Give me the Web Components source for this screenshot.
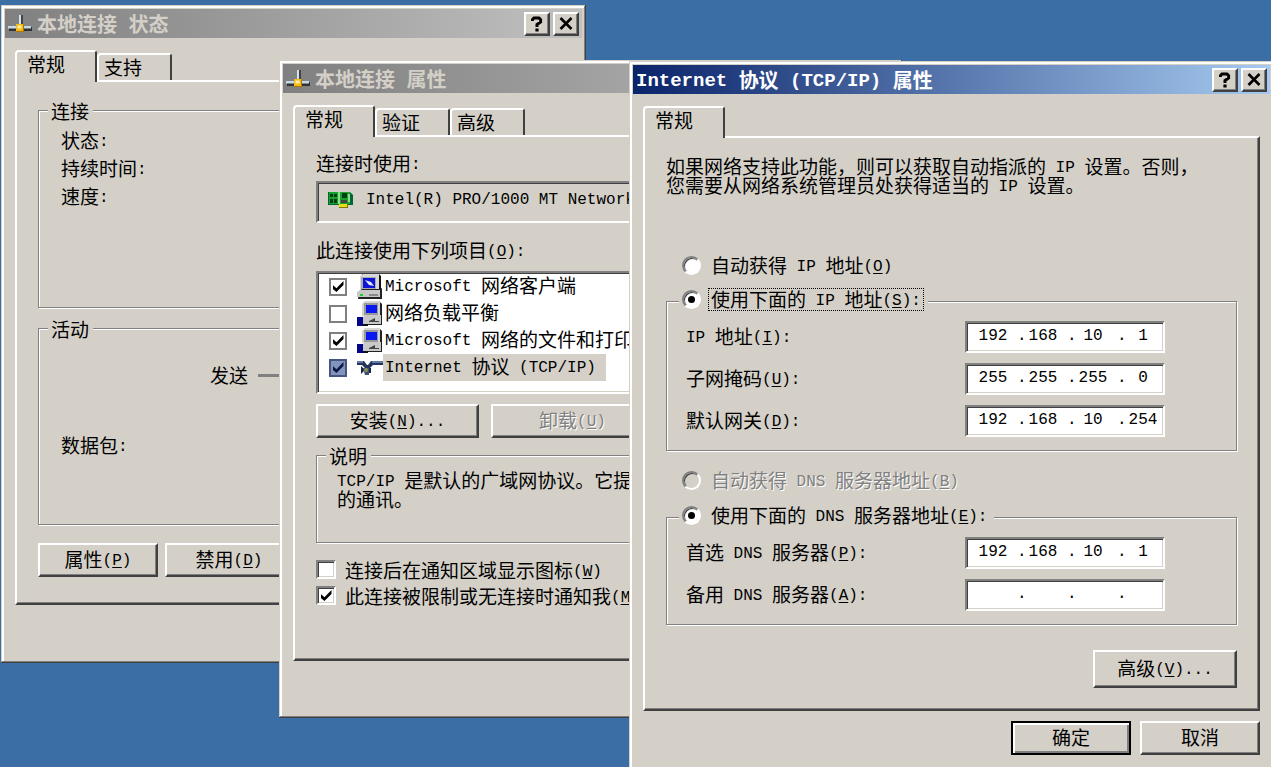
<!DOCTYPE html>
<html lang="zh-CN">
<head>
<meta charset="utf-8">
<title>Internet 协议 (TCP/IP) 属性</title>
<style>
  html, body {
    height: 100%;
  }
  body {
    margin: 0;
    position: relative;
    overflow: hidden;
    background: #3a6ea5;
    color: #000;
    font: 19px/19px "Noto Sans CJK SC", sans-serif;
    --face: #d4d0c8;
    --shadow: #808080;
    --dark: #404040;
  }

  /* the three windows on the desktop */
  #status { left: 1px; top: 5px; width: 46vw; }
  #connection { left: 279px; top: 60px; width: 49vw; }
  #tcpip { left: 629px; top: 61px; right: -3px; }

  p { margin: 0; }
  u { text-underline-offset: 2px; }
  .row { display: flex; align-items: center; }
  .stats p { line-height: 28px; padding-left: 22px; white-space: nowrap; }
  .stats .send { display: flex; align-items: center; gap: 10px; padding-left: 171px; margin-top: 17px; }
  .send::after { content: ""; flex: 1; height: 3px; margin-right: 40px; background: var(--shadow); }
  .stats .packets { margin-top: 42px; }
  .nowrap { white-space: nowrap; }
</style>
</head>
<body>

<desktop-window id="status">
  <net-icon slot="icon" kind="link"></net-icon>
  <span slot="title">本地连接<en-text> </en-text>状态</span>
  <tab-view style="--top: 19px; --bottom: 26px">
    <span slot="active">常规</span>
    <span slot="tabs">支持</span>
    <group-box class="stats" style="--height: 207px; --inset: 6px">
      <span slot="legend">连接</span>
      <p>状态<en-text>:</en-text></p>
      <p>持续时间<en-text>:</en-text></p>
      <p>速度<en-text>:</en-text></p>
    </group-box>
    <group-box class="stats" style="--height: 206px; --inset: 6px; margin-top: 11px">
      <span slot="legend">活动</span>
      <p class="send">发送</p>
      <p class="packets">数据包<en-text>:</en-text></p>
    </group-box>
    <div class="row" style="gap: 7px; margin-top: 18px">
      <push-button style="width: 120px">属性<en-text>(<u>P</u>)</en-text></push-button>
      <push-button style="width: 128px">禁用<en-text>(<u>D</u>)</en-text></push-button>
    </div>
  </tab-view>
  <div style="height: 54px"></div>
</desktop-window>

<desktop-window id="connection">
  <net-icon slot="icon" kind="link"></net-icon>
  <span slot="title">本地连接<en-text> </en-text>属性</span>
  <tab-view style="--top: 16px; --bottom: 54px">
    <span slot="active">常规</span>
    <span slot="tabs">验证</span>
    <span slot="tabs">高级</span>
    <p>连接时使用<en-text>:</en-text></p>
    <adapter-box style="margin-top: 9px">
      <net-icon kind="card"></net-icon>
      <en-text>Intel(R) PRO/1000 MT Network</en-text>
    </adapter-box>
    <p style="margin-top: 17px">此连接使用下列项目<en-text>(<u>O</u>):</en-text></p>
    <component-list style="margin-top: 12px">
      <component-item checked kind="client"><en-text>Microsoft </en-text>网络客户端</component-item>
      <component-item kind="service">网络负载平衡</component-item>
      <component-item checked kind="service"><en-text>Microsoft </en-text>网络的文件和打印</component-item>
      <component-item checked selected kind="protocol"><en-text>Internet </en-text>协议<en-text> (TCP/IP)</en-text></component-item>
    </component-list>
    <div class="row" style="gap: 12px; margin-top: 10px">
      <push-button style="width: 163px">安装<en-text>(<u>N</u>)...</en-text></push-button>
      <push-button disabled style="width: 163px">卸载<en-text>(<u>U</u>)</en-text></push-button>
    </div>
    <group-box style="--height: 97px; --inset: 5px; margin-top: 8px">
      <span slot="legend">说明</span>
      <p class="nowrap" style="padding-left: 20px"><en-text>TCP/IP </en-text>是默认的广域网协议。它提<br>的通讯。</p>
    </group-box>
    <check-option style="margin-top: 17px">连接后在通知区域显示图标<en-text>(<u>W</u>)</en-text></check-option>
    <check-option checked style="margin-top: 7px">此连接被限制或无连接时通知我<en-text>(<u>M</u>)</en-text></check-option>
  </tab-view>
  <div style="height: 53px"></div>
</desktop-window>

<desktop-window id="tcpip" active>
  <span slot="title"><en-text>Internet </en-text>协议<en-text> (TCP/IP) </en-text>属性</span>
  <tab-view style="--top: 18px; --bottom: 21px">
    <span slot="active">常规</span>
    <p class="nowrap">如果网络支持此功能，则可以获取自动指派的<en-text> IP </en-text>设置。否则，<br>您需要从网络系统管理员处获得适当的<en-text> IP </en-text>设置。</p>
    <radio-option group="ip" style="margin: 60px 0 0 16px">自动获得<en-text> IP </en-text>地址<en-text>(<u>O</u>)</en-text></radio-option>
    <group-box style="--legend: 12px; --pad-bottom: 13px; --inset: 7px; margin-top: 11px">
      <radio-option slot="legend" group="ip" checked focused>使用下面的<en-text> IP </en-text>地址<en-text>(<u>S</u>):</en-text></radio-option>
      <ip-row value="192.168.10.1"><en-text>IP </en-text>地址<en-text>(<u>I</u>):</en-text></ip-row>
      <ip-row value="255.255.255.0">子网掩码<en-text>(<u>U</u>):</en-text></ip-row>
      <ip-row value="192.168.10.254">默认网关<en-text>(<u>D</u>):</en-text></ip-row>
    </group-box>
    <radio-option group="dns" disabled style="margin: 18px 0 0 16px">自动获得<en-text> DNS </en-text>服务器地址<en-text>(<u>B</u>)</en-text></radio-option>
    <group-box style="--legend: 12px; --pad-bottom: 13px; --inset: 7px; margin-top: 12px">
      <radio-option slot="legend" group="dns" checked>使用下面的<en-text> DNS </en-text>服务器地址<en-text>(<u>E</u>):</en-text></radio-option>
      <ip-row value="192.168.10.1">首选<en-text> DNS </en-text>服务器<en-text>(<u>P</u>):</en-text></ip-row>
      <ip-row value="...">备用<en-text> DNS </en-text>服务器<en-text>(<u>A</u>):</en-text></ip-row>
    </group-box>
    <div class="row" style="justify-content: flex-end; margin-top: 25px">
      <push-button style="width: 144px; --button-height: 38px">高级<en-text>(<u>V</u>)...</en-text></push-button>
    </div>
  </tab-view>
  <div class="row" style="justify-content: flex-end; gap: 9px; padding: 10px 10px 20px">
    <push-button default style="width: 120px">确定</push-button>
    <push-button style="width: 120px">取消</push-button>
  </div>
</desktop-window>

<script>
// every element below gets its shadow root from one html string
class Base extends HTMLElement {
  constructor() {
    super();
    this.attachShadow({ mode: "open" });
  }

  connectedCallback() {
    if (this.shadowRoot.firstChild) return;
    const template = document.createElement("template");
    template.innerHTML = this.render().trim();
    this.shadowRoot.appendChild(template.content.cloneNode(true));
    this.ready();
  }

  flag(name) {
    return this.hasAttribute(name) ? name : "";
  }

  ready() {}
}

// latin text is set in half-width cells next to the chinese glyphs
class EnText extends Base {
  render() {
    return `
<style>
:host {
  font-family: "Liberation Mono", monospace;
  font-size: var(--en-size, 16px);
  line-height: 0;
  vertical-align: 2px;
  white-space: pre;
}
</style><slot></slot>`;
  }
}

class DesktopWindow extends Base {
  render() {
    return `
<style>
:host {
  display: block;
  position: absolute;
  box-sizing: border-box;
  padding: 4px;
  background: var(--face);
  box-shadow: inset -1px -1px 0 var(--dark), inset 1px 1px 0 var(--face),
    inset -2px -2px 0 var(--shadow), inset 3px 3px 0 #fff;
}
header {
  display: flex;
  align-items: center;
  height: 29px;
  padding: 0 3px;
  background: linear-gradient(to right, #808080, #c0c0c0);
  color: var(--face);
}
:host([active]) header {
  background: linear-gradient(to right, #0a246a, #a6caf0);
  color: #fff;
}
h1 {
  flex: 1;
  margin: 0;
  font-size: 20px;
  line-height: 24px;
  font-weight: bold;
  white-space: nowrap;
  --en-size: 19px;
}
::slotted(net-icon) { margin-right: 4px; }
button {
  display: flex;
  align-items: center;
  justify-content: center;
  width: 26px;
  height: 24px;
  margin-left: 3px;
  padding: 0;
  border: 2px solid;
  border-color: #fff var(--dark) var(--dark) #fff;
  background: var(--face);
  box-shadow: inset -1px -1px 0 var(--shadow);
}
</style>
<header>
  <slot name="icon"></slot>
  <h1><slot name="title"></slot></h1>
  <button type="button" aria-label="帮助">
    <svg width="12" height="16" viewBox="0 0 12 16" fill="none" stroke="#000" stroke-width="3"><path d="M1.5 5V3.5L3 1.9h5l1.6 1.6v2.4L6 8.6V11M4.400 14h3.200"/></svg>
  </button>
  <button type="button" aria-label="关闭">
    <svg width="14" height="13" viewBox="0 0 14 13" stroke="#000" stroke-width="2.600"><path d="M1.500 1l11 11M12.500 1l-11 11"/></svg>
  </button>
</header>
<slot></slot>`;
  }
}

class TabView extends Base {
  render() {
    return `
<style>
:host {
  display: block;
  margin: 12px 10px 0;
}
nav {
  display: flex;
  align-items: flex-end;
  height: 30px;
}
.active, ::slotted([slot=tabs]) {
  box-sizing: border-box;
  border: 2px solid;
  border-color: #fff var(--dark) transparent #fff;
  border-bottom: 0;
  border-radius: 4px 3px 0 0;
  background: var(--face);
}
.active {
  position: relative;
  width: 82px;
  height: 32px;
  margin-bottom: -2px;
  padding: 2px 0 0 10px;
}
::slotted([slot=tabs]) {
  width: 75px;
  height: 27px;
  padding: 2px 0 0 5px;
}
section {
  padding: var(--top) 21px var(--bottom);
  border: 2px solid;
  border-color: #fff var(--dark) var(--dark) #fff;
  box-shadow: inset -1px -1px 0 var(--shadow);
}
</style>
<nav><div class="active"><slot name="active"></slot></div><slot name="tabs"></slot></nav>
<section><slot></slot></section>`;
  }
}

class GroupBox extends Base {
  render() {
    return `
<style>
:host { display: block; }
fieldset {
  box-sizing: border-box;
  min-width: 0;
  min-height: var(--height, 0);
  margin: 0;
  padding: var(--inset) 0 var(--pad-bottom, 0);
  border: 1px solid var(--shadow);
  box-shadow: 1px 1px 0 #fff, inset 1px 1px 0 #fff;
}
legend {
  margin-left: var(--legend, 9px);
  padding: 0 4px 0 3px;
  background: var(--face);
}
</style>
<fieldset>
  <legend><slot name="legend"></slot></legend>
  <slot></slot>
</fieldset>`;
  }
}

class PushButton extends Base {
  render() {
    return `
<style>
:host { display: block; }
button {
  display: block;
  box-sizing: border-box;
  width: 100%;
  height: var(--button-height, 34px);
  padding: 0 0 4px;
  border: 2px solid;
  border-color: #fff var(--dark) var(--dark) #fff;
  background: var(--face);
  box-shadow: inset -1px -1px 0 var(--shadow);
  color: #000;
  font: inherit;
  white-space: nowrap;
}
:host([default]) button {
  border-color: #000;
  box-shadow: inset 2px 2px 0 #fff, inset -2px -2px 0 var(--shadow);
}
button:disabled {
  color: var(--shadow);
  text-shadow: 1px 1px 0 #fff;
}
</style>
<button type="button" ${this.flag("disabled")}><slot></slot></button>`;
  }
}

const tick = `
input:checked::before {
  content: "";
  width: 11px;
  height: 11px;
  background: #000;
  clip-path: polygon(0 35%, 36% 65%, 100% 0, 100% 36%, 36% 100%, 0 70%);
}`;

class CheckOption extends Base {
  render() {
    return `
<style>
:host { display: block; }
label {
  display: flex;
  align-items: center;
  gap: 9px;
  white-space: nowrap;
}
input {
  appearance: none;
  display: grid;
  place-content: center;
  box-sizing: border-box;
  width: 20px;
  height: 19px;
  margin: 0;
  border: 2px solid;
  border-color: var(--shadow) #fff #fff var(--shadow);
  background: #fff;
  box-shadow: inset 1px 1px 0 var(--dark), inset -1px -1px 0 var(--face);
}
${tick}
</style>
<label><input type="checkbox" ${this.flag("checked")}><span><slot></slot></span></label>`;
  }
}

class RadioOption extends Base {
  render() {
    return `
<style>
:host { display: block; }
:host([slot=legend]) { padding-bottom: 3px; }
label {
  display: flex;
  align-items: center;
  gap: 7px;
  white-space: nowrap;
}
input {
  appearance: none;
  display: grid;
  place-content: center;
  box-sizing: border-box;
  width: 19px;
  height: 19px;
  margin: 0;
  border: 2px solid;
  border-color: var(--shadow) #fff #fff var(--shadow);
  border-radius: 50%;
  background: #fff;
  box-shadow: inset 1px 1px 0 var(--dark);
}
input:checked::before {
  content: "";
  width: 7px;
  height: 7px;
  border-radius: 50%;
  background: #000;
}
input:disabled { background: var(--face); }
input:disabled + span {
  color: var(--shadow);
  text-shadow: 1px 1px 0 #fff;
}
span {
  padding: 0 2px 2px;
  border: 1px solid transparent;
}
:host([focused]) span { border: 1px dotted #000; }
</style>
<label><input type="radio" name="${this.getAttribute("group")}" ${this.flag("checked")} ${this.flag("disabled")}><span><slot></slot></span></label>`;
  }

  ready() {
    // radios in separate shadow roots don't exclude each other
    const group = this.getAttribute("group");
    this.shadowRoot.querySelector("input").addEventListener("change", () => {
      document.querySelectorAll(`radio-option[group=${group}]`).forEach((other) => {
        if (other !== this) other.shadowRoot.querySelector("input").checked = false;
      });
    });
  }
}

class IpRow extends Base {
  render() {
    const octets = this.getAttribute("value").split(".");
    const fields = octets
      .map((n, i) => `<input ${i ? `aria-label="${i + 1}"` : 'id="first"'} maxlength="3" value="${n}">`)
      .join("<b>.</b>");
    return `
<style>
:host {
  display: flex;
  align-items: center;
  justify-content: space-between;
  padding: 0 71px 0 19px;
}
:host(:not(:last-child)) { margin-bottom: 10px; }
label {
  padding-bottom: 4px;
  white-space: nowrap;
}
div {
  display: flex;
  align-items: center;
  box-sizing: border-box;
  width: 200px;
  height: 32px;
  padding: 0 0 2px 6px;
  border: 2px solid;
  border-color: var(--shadow) #fff #fff var(--shadow);
  background: #fff;
  box-shadow: inset 1px 1px 0 var(--dark), inset -1px -1px 0 var(--face);
}
input, b {
  flex: none;
  font: 16px/19px "Liberation Mono", monospace;
}
input {
  box-sizing: border-box;
  width: 44px;
  padding: 0 4px 0 0;
  border: 0;
  outline: 0;
  background: none;
  text-align: center;
}
input:last-child { width: 40px; padding: 0; }
b { width: 6px; }
</style>
<label for="first"><slot></slot></label>
<div>${fields}</div>`;
  }
}

class AdapterBox extends Base {
  render() {
    return `
<style>
:host {
  display: flex;
  align-items: center;
  gap: 12px;
  box-sizing: border-box;
  height: 42px;
  padding: 0 0 4px 10px;
  border: 2px solid;
  border-color: var(--shadow) #fff #fff var(--shadow);
  box-shadow: inset 1px 1px 0 var(--dark);
}
</style><slot></slot>`;
  }
}

class ComponentList extends Base {
  render() {
    return `
<style>
:host {
  display: block;
  padding-bottom: 11px;
  border: 2px solid;
  border-color: var(--shadow) #fff #fff var(--shadow);
  background: #fff;
  box-shadow: inset 1px 1px 0 var(--dark), inset -1px -1px 0 var(--face);
}
</style><slot></slot>`;
  }
}

class ComponentItem extends Base {
  render() {
    return `
<style>
:host { display: block; }
label {
  display: flex;
  align-items: center;
  height: 27px;
  padding-left: 11px;
  white-space: nowrap;
}
input {
  appearance: none;
  display: grid;
  place-content: center;
  box-sizing: border-box;
  width: 18px;
  height: 18px;
  margin: 0 10px 0 0;
  border: 2px solid var(--shadow);
  background: #fff;
}
${tick}
span { padding: 0 10px 4px 2px; line-height: 23px; }
:host([selected]) span { background: var(--face); }
:host([selected]) input { border-color: #45557f; background: #8294bd; }
:host([selected]) input::before { background: #0a1a45; }
</style>
<label><input type="checkbox" ${this.flag("checked")}><net-icon kind="${this.getAttribute("kind")}"></net-icon><span><slot></slot></span></label>`;
  }
}

const icons = {
  link: `<svg width="25" height="18" viewBox="0 0 25 18">
    <path d="M11 0h4v10h-4z" fill="#444"/><path d="M11 0h2v10h-2z" fill="#cfe2f2"/>
    <path d="M1 12h23v4H1z" fill="#333"/><path d="M0 11h23v2.500H0z" fill="#c4d9ea"/>
    <path d="M8 9h8v8H8z" fill="#b07800"/><path d="M8 9h7v7H8z" fill="#f2b81c"/><path d="M9.500 10.500h4v3h-4z" fill="#fff0a8"/>
  </svg>`,
  card: `<svg width="26" height="18" viewBox="0 0 26 18">
    <path d="M0 1h22l3 3v10H0z" fill="#063"/><path d="M1 1h21v12H1z" fill="#18a32c"/>
    <path d="M2 3h3v3H2zM6 3h3v3H6zM2 8h3v4H2zM6 8h3v4H6zM14 2h5v5h-5z" fill="#063d16"/>
    <path d="M10 1h2v12h-2zM20 3h2v8h-2z" fill="#8fe08c"/><path d="M13 9h6v3h-6z" fill="#444"/>
    <path d="M11 13h9v4h-9z" fill="#7d7a00"/><path d="M11 13h8v3h-8z" fill="#e7df12"/>
  </svg>`,
  client: `<svg width="26" height="26" viewBox="0 0 26 26">
    <path d="M5 0h17l2 2v15H5z" fill="#111"/><path d="M3 2l3-2h16v16H3z" fill="#d8d8d8"/>
    <path d="M4 3h15v13H4z" fill="#aaa"/><path d="M6 4h12v10H6z" fill="#0b14d8"/><path d="M8 6l6 2 3 4-5-1z" fill="#e4e8ff"/>
    <path d="M2 18l3-3h18l2-1v11H1z" fill="#222"/><path d="M0 18l3-2h20v7H0z" fill="#c7c7c7"/>
    <path d="M12 20h9v2h-9z" fill="#888"/><path d="M3 20h3v2H3z" fill="#18d030"/>
  </svg>`,
  service: `<svg width="26" height="26" viewBox="0 0 26 26">
    <path d="M9 0h13l3 3v21H8z" fill="#222"/><path d="M5 3l3-3h15v15H5z" fill="#d5d5d5"/>
    <path d="M7 2h14v12H7z" fill="#999"/><path d="M9 4h11v8H9z" fill="#0919f0"/>
    <path d="M5 17l3-3h16v9H5z" fill="#c9c9c9"/><path d="M12 20l6-3v3h4v1H12z" fill="#444"/>
    <path d="M0 16h6v9H0z" fill="#05058c"/><path d="M6 23h5v2H6z" fill="#111"/>
  </svg>`,
  protocol: `<svg width="26" height="26" viewBox="0 0 26 26">
    <path d="M0 6h7l3 4h1l3-4h12v4H16l-4 4-2 1-5-5H0z" fill="#23355f"/><path d="M0 6h6v2H0zM15 6h11v2H15z" fill="#627ba5"/>
    <path d="M4 11l4 4-4 4zM12 13h2v5h-2z" fill="#17264c"/><path d="M6 13h6v7H8z" fill="#405070"/><circle cx="9" cy="15" r="2" fill="#8c9153"/>
  </svg>`
};

class NetIcon extends Base {
  render() {
    return `
<style>
:host { display: block; flex: none; }
svg { display: block; }
</style>${icons[this.getAttribute("kind")]}`;
  }
}

customElements.define("en-text", EnText);
customElements.define("net-icon", NetIcon);
customElements.define("desktop-window", DesktopWindow);
customElements.define("tab-view", TabView);
customElements.define("group-box", GroupBox);
customElements.define("push-button", PushButton);
customElements.define("check-option", CheckOption);
customElements.define("radio-option", RadioOption);
customElements.define("ip-row", IpRow);
customElements.define("adapter-box", AdapterBox);
customElements.define("component-list", ComponentList);
customElements.define("component-item", ComponentItem);
</script>
</body>
</html>
